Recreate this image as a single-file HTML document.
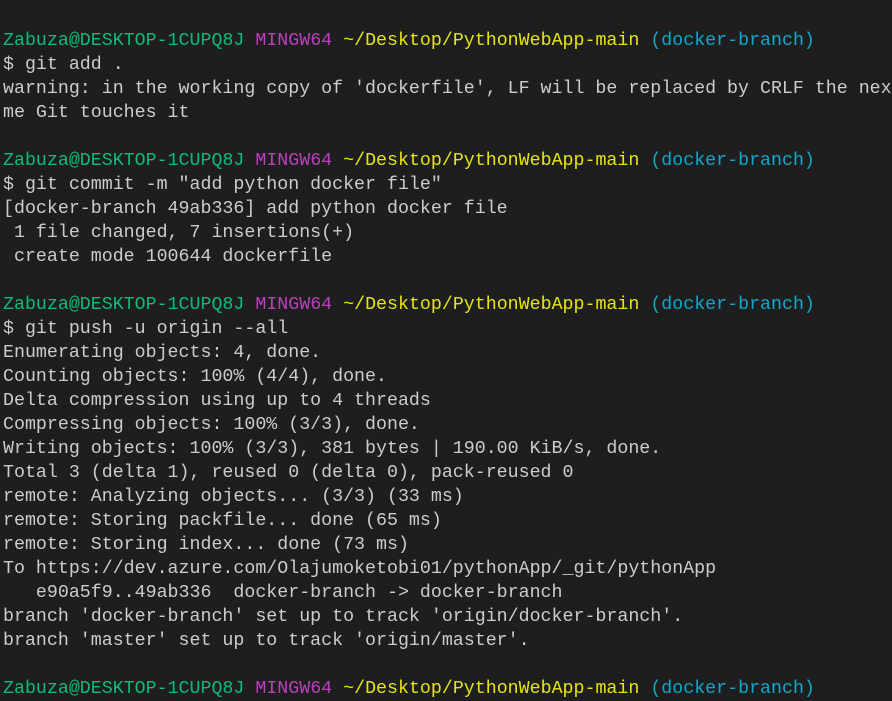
<!DOCTYPE html>
<html><head><style>
html,body{margin:0;padding:0;background:#1e1e1e;width:892px;height:694px;overflow:hidden}
pre{margin:0;position:absolute;left:3px;top:29px;font-family:"Liberation Mono",monospace;font-size:18.3px;line-height:24px;color:#cccccc;white-space:pre}
.g{color:#0dbc79}.m{color:#bc3fbc}.y{color:#e5e510}.c{color:#11a8cd}
</style></head><body><pre><span class="g">Zabuza@DESKTOP-1CUPQ8J</span> <span class="m">MINGW64</span> <span class="y">~/Desktop/PythonWebApp-main</span> <span class="c">(docker-branch)</span>
$ git add .
warning: in the working copy of 'dockerfile', LF will be replaced by CRLF the next
me Git touches it

<span class="g">Zabuza@DESKTOP-1CUPQ8J</span> <span class="m">MINGW64</span> <span class="y">~/Desktop/PythonWebApp-main</span> <span class="c">(docker-branch)</span>
$ git commit -m "add python docker file"
[docker-branch 49ab336] add python docker file
 1 file changed, 7 insertions(+)
 create mode 100644 dockerfile

<span class="g">Zabuza@DESKTOP-1CUPQ8J</span> <span class="m">MINGW64</span> <span class="y">~/Desktop/PythonWebApp-main</span> <span class="c">(docker-branch)</span>
$ git push -u origin --all
Enumerating objects: 4, done.
Counting objects: 100% (4/4), done.
Delta compression using up to 4 threads
Compressing objects: 100% (3/3), done.
Writing objects: 100% (3/3), 381 bytes | 190.00 KiB/s, done.
Total 3 (delta 1), reused 0 (delta 0), pack-reused 0
remote: Analyzing objects... (3/3) (33 ms)
remote: Storing packfile... done (65 ms)
remote: Storing index... done (73 ms)
To https://dev.azure.com/Olajumoketobi01/pythonApp/_git/pythonApp
   e90a5f9..49ab336  docker-branch -> docker-branch
branch 'docker-branch' set up to track 'origin/docker-branch'.
branch 'master' set up to track 'origin/master'.

<span class="g">Zabuza@DESKTOP-1CUPQ8J</span> <span class="m">MINGW64</span> <span class="y">~/Desktop/PythonWebApp-main</span> <span class="c">(docker-branch)</span>
</pre></body></html>
